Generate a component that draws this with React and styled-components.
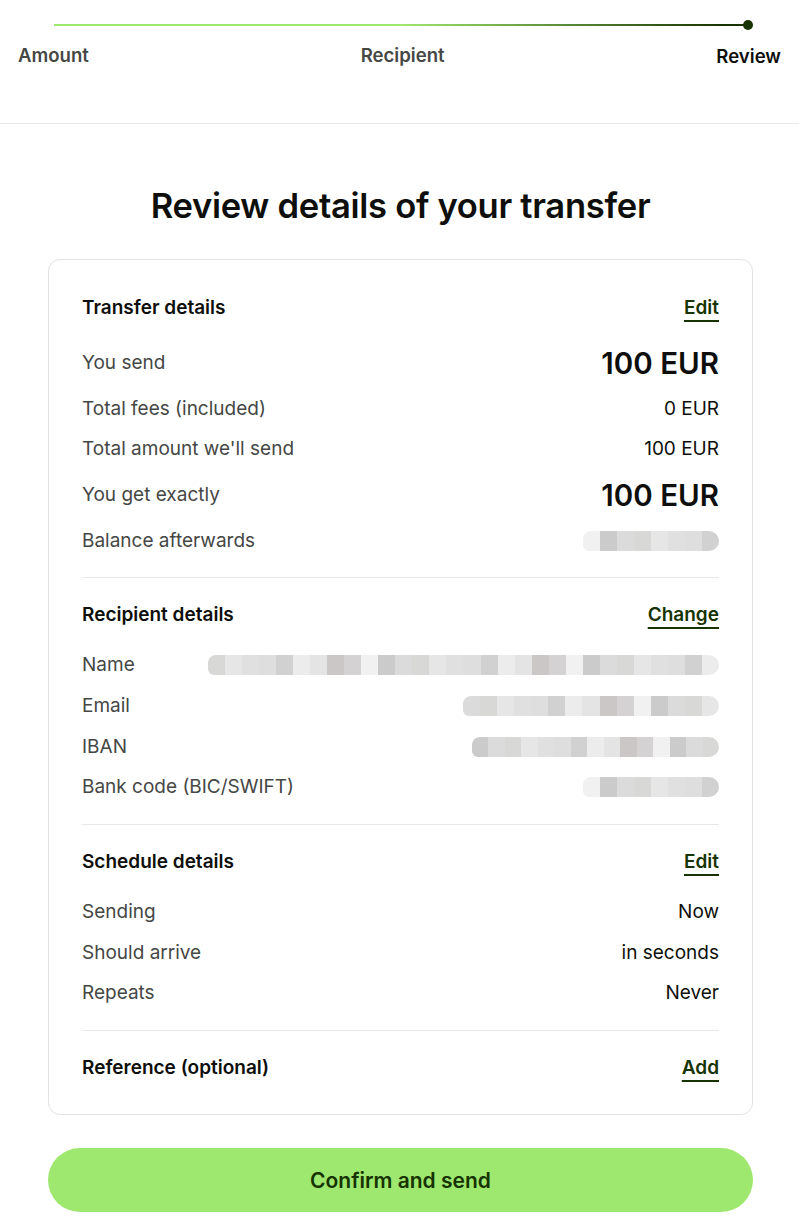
import styled, { createGlobalStyle } from 'styled-components'

const GlobalStyle = createGlobalStyle`
  body {
    margin: 0;
    background: #ffffff;
    font-family: Inter, "Noto Sans", "Liberation Sans", sans-serif;
    color: #0e0f0c;
  }
`

const colors = {
  ink: '#0e0f0c',
  muted: '#454745',
  forest: '#163300',
  lime: '#9fe870',
  line: '#e8e8e8'
}

const Header = styled.header`
  padding: 20px 18px 55px;
  border-bottom: 1px solid ${colors.line};
`

const TrackRow = styled.div`
  display: flex;
  align-items: center;
  height: 10px;
  margin: 0 28px 0 36px;
`

const Track = styled.div`
  flex: 1;
  height: 2px;
  background: linear-gradient(90deg, ${colors.lime} 0%, ${colors.lime} 50%, ${colors.forest} 97%);
`

const Dot = styled.div`
  width: 10px;
  height: 10px;
  border-radius: 50%;
  background: ${colors.forest};
  margin-left: -2px;
`

const Steps = styled.div`
  display: flex;
  justify-content: space-between;
  margin-top: 13px;
`

const Step = styled.span`
  font-size: 18.6px;
  line-height: 24px;
  font-weight: 600;
  color: ${p => (p.$active ? colors.ink : colors.muted)};
  margin-top: ${p => (p.$active ? '1px' : '0')};
`

const Main = styled.main`
  padding: 61px 46px 12px 48px;
`

const Title = styled.h1`
  margin: 0 0 34px;
  text-align: center;
  font-size: 34.6px;
  line-height: 40px;
  font-weight: 600;
  letter-spacing: -0.3px;
`

const Card = styled.section`
  border: 1px solid #e2e2e2;
  border-radius: 12px;
  padding: 11px 33px 10px;
`

const Section = styled.div`
  padding: 25px 0 24.5px;
  & + & {
    border-top: 1px solid ${colors.line};
  }
`

const SectionHead = styled.div`
  display: flex;
  justify-content: space-between;
  align-items: center;
  margin-bottom: ${p => (p.$last ? '0' : '26px')};
`

const SectionTitle = styled.h2`
  margin: 0;
  font-size: 19px;
  line-height: 24px;
  font-weight: 600;
`

const LinkButton = styled.a`
  font-size: 19px;
  line-height: 24px;
  font-weight: 600;
  color: ${colors.forest};
  text-decoration: underline;
  text-decoration-thickness: 1.5px;
  text-underline-offset: 6px;
  cursor: pointer;
`

const Rows = styled.div`
  display: flex;
  flex-direction: column;
  gap: 16.7px;
`

const Row = styled.div`
  display: flex;
  justify-content: space-between;
  align-items: center;
`

const Label = styled.span`
  font-size: 19px;
  line-height: 24px;
  color: ${colors.muted};
`

const Value = styled.span`
  font-size: ${p => (p.$big ? '29.5px' : '19px')};
  line-height: ${p => (p.$big ? '34px' : '24px')};
  font-weight: ${p => (p.$big ? 600 : 400)};
  color: ${colors.ink};
`

const Redacted = styled.span`
  display: flex;
  height: 20px;
  width: ${p => p.$width}px;
  border-radius: 8px 10px 10px 6px;
  overflow: hidden;
  filter: blur(0.6px);
`

const Cell = styled.span`
  flex: 1;
  background: ${p => p.$shade};
`

const Confirm = styled.button`
  display: block;
  width: 100%;
  height: 64px;
  margin-top: 33px;
  border: none;
  border-radius: 32px;
  background: ${colors.lime};
  color: ${colors.forest};
  font-family: inherit;
  font-size: 21px;
  font-weight: 600;
  cursor: pointer;
`

const shades = ['#e6e6e6', '#d4d2d2', '#dedede', '#cbcbcb', '#ececec', '#d8d8d6', '#cbc7c7', '#e0e0e0', '#f1f1f1', '#d1d1d1', '#dbdbdb', '#e4e4e4']

function Blur({ width, seed = 0 }) {
  const count = Math.round(width / 17)
  const cells = Array.from({ length: count }, (_, i) => shades[(i * 7 + seed * 5) % shades.length])
  return (
    <Redacted $width={width}>
      {cells.map((c, i) => <Cell key={i} $shade={c} />)}
    </Redacted>
  )
}

const sections = [
  {
    title: 'Transfer details',
    action: 'Edit',
    rows: [
      { label: 'You send', value: '100 EUR', big: true },
      { label: 'Total fees (included)', value: '0 EUR' },
      { label: "Total amount we'll send", value: '100 EUR' },
      { label: 'You get exactly', value: '100 EUR', big: true },
      { label: 'Balance afterwards', blur: 136 }
    ]
  },
  {
    title: 'Recipient details',
    action: 'Change',
    rows: [
      { label: 'Name', blur: 511 },
      { label: 'Email', blur: 256 },
      { label: 'IBAN', blur: 247 },
      { label: 'Bank code (BIC/SWIFT)', blur: 136 }
    ]
  },
  {
    title: 'Schedule details',
    action: 'Edit',
    rows: [
      { label: 'Sending', value: 'Now' },
      { label: 'Should arrive', value: 'in seconds' },
      { label: 'Repeats', value: 'Never' }
    ]
  },
  {
    title: 'Reference (optional)',
    action: 'Add',
    rows: []
  }
]

export default function App() {
  return (
    <>
      <GlobalStyle />
      <Header>
        <TrackRow>
          <Track />
          <Dot />
        </TrackRow>
        <Steps>
          <Step>Amount</Step>
          <Step>Recipient</Step>
          <Step $active>Review</Step>
        </Steps>
      </Header>
      <Main>
        <Title>Review details of your transfer</Title>
        <Card>
          {sections.map((s, si) => (
            <Section key={s.title}>
              <SectionHead $last={s.rows.length === 0}>
                <SectionTitle>{s.title}</SectionTitle>
                <LinkButton>{s.action}</LinkButton>
              </SectionHead>
              {s.rows.length > 0 && (
                <Rows>
                  {s.rows.map((r, ri) => (
                    <Row key={r.label}>
                      <Label>{r.label}</Label>
                      {r.blur ? <Blur width={r.blur} seed={si + ri} /> : <Value $big={r.big}>{r.value}</Value>}
                    </Row>
                  ))}
                </Rows>
              )}
            </Section>
          ))}
        </Card>
        <Confirm>Confirm and send</Confirm>
      </Main>
    </>
  )
}
